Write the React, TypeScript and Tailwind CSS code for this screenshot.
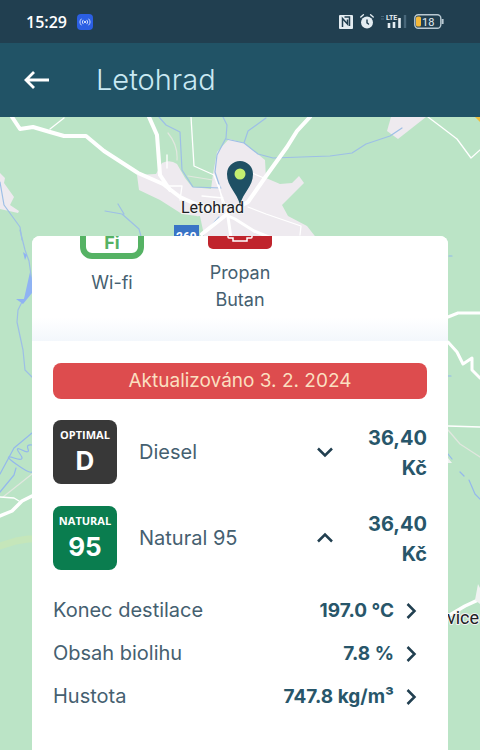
import React, { useState } from 'react';

interface FuelParameter {
  label: string;
  value: string;
}

interface Fuel {
  id: string;
  brand: string;
  grade: string;
  name: string;
  price: string;
  badgeClass: string;
  parameters: FuelParameter[];
}

const fuels: Fuel[] = [
  { id: 'diesel', brand: 'OPTIMAL', grade: 'D', name: 'Diesel', price: '36,40', badgeClass: 'bg-[#383838]', parameters: [] },
  {
    id: 'natural95',
    brand: 'NATURAL',
    grade: '95',
    name: 'Natural 95',
    price: '36,40',
    badgeClass: 'bg-[#0a7d4f]',
    parameters: [
      { label: 'Konec destilace', value: '197.0 °C' },
      { label: 'Obsah biolihu', value: '7.8 %' },
      { label: 'Hustota', value: '747.8 kg/m³' },
    ],
  },
];

const StatusBar: React.FC = () => (
  <div className="flex h-[43px] items-center justify-between bg-[#213f50] pl-[26px] pr-9">
    <div className="flex items-center gap-[10px]">
      <span className="font-['Open_Sans',sans-serif] text-[16px] font-semibold leading-6 text-white">15:29</span>
      <svg className="h-4 w-4" viewBox="0 0 16 16" fill="none" stroke="#dbe6ff" strokeLinecap="round">
        <rect width="16" height="16" rx="4" fill="#2b5fe3" stroke="none" />
        <circle cx="8" cy="8" r="1" fill="#fff" stroke="none" />
        <path d="M6 6.2a2.6 2.6 0 0 0 0 3.6M10 6.2a2.6 2.6 0 0 1 0 3.6M4.2 5a4.4 4.4 0 0 0 0 6M11.8 5a4.4 4.4 0 0 1 0 6" strokeWidth="0.9" />
      </svg>
    </div>
    <div className="flex items-center gap-[7px]">
      <svg className="h-[14px] w-[14px]" viewBox="0 0 14 14">
        <rect width="14" height="14" rx="1" fill="#e4edf2" />
        <path d="M3.500 12V3.500L8.500 9V4.500M5.500 2H10.500V11" fill="none" stroke="#213f50" strokeWidth="1.500" />
      </svg>
      <svg className="h-[15px] w-[14px]" viewBox="0 0 14 15" fill="none" strokeLinecap="round">
        <circle cx="7" cy="8.500" r="6" fill="#e4edf2" />
        <path d="M0.800 3 3.400 0.800M13.200 3 10.600 0.800" stroke="#e4edf2" strokeWidth="1.400" />
        <path d="M7 6v2.800l1.500 1.200" stroke="#213f50" strokeWidth="1.400" />
      </svg>
      <svg className="h-[15px] w-[26px]" viewBox="0 0 26 15">
        <path d="M0 2.500h3M0 5h3" stroke="#48677a" strokeWidth="1" />
        <text x="5" y="6" fill="#e4edf2" className="font-['Roboto',sans-serif] text-[7px] font-bold">LTE</text>
        <path d="M8 9v5M13 8v6" stroke="#e4edf2" strokeWidth="2.600" />
        <path d="M18.500 4v10" stroke="#e4edf2" strokeWidth="2.600" />
        <path d="M24 1v13" stroke="#48677a" strokeWidth="2.400" />
      </svg>
      <svg className="h-[15px] w-[30px]" viewBox="0 0 30 15">
        <rect x="0.8" y="0.8" width="26" height="13.400" rx="3.500" fill="none" stroke="#b9c9d2" strokeWidth="1.400" />
        <path d="M28.600 5v5" stroke="#b9c9d2" strokeWidth="2" />
        <rect x="2" y="2.500" width="5" height="10" rx="1.500" fill="#f5b93a" />
        <text x="8" y="11.500" fill="#e4edf2" className="font-['Roboto',sans-serif] text-[11px]">18</text>
      </svg>
    </div>
  </div>
);

const AreaMap: React.FC = () => (
  <svg
    className="absolute inset-0 h-full w-full"
    viewBox="0 117 480 633"
    preserveAspectRatio="xMidYMin slice"
    fill="none"
    strokeLinejoin="round"
    strokeLinecap="round"
  >
    <rect y="117" width="480" height="633" fill="#bbe4c6" />
    {/* built-up areas */}
    <g fill="#eeeaef">
      <path d="M0 173 5 178 4 183 14 197 10 205 19 211 18 213 0 209Z" />
      <path d="M137 175 156 174 162 163Q170 159 177 164L185 178 192 187 211 189 213 174 217 152 229 139 244 143 265 160 266 178 280 184 292 183 299 176 304 183 282 205 288 216 307 226 318 240H205L197 216 182 214 160 200 139 190Z" />
      <path d="M391 117H426L398 139 387 131Z" />
    </g>
    <path d="M182 218 200 216 205 240H180Z" fill="#bbe4c6" />
    {/* streams */}
    <g stroke="#9dbfe6" strokeWidth="1.200">
      <path d="M159 117 166 125 180 132 182 170 193 187 221 188M223 117 227 125 226 138 217 155 215 172 220 187M226 139 244 143 248 131 266 118M244 143 258 154 273 158 330 156 352 153 366 144 390 136 402 128" />
      <path d="M0 182 4 205 20 227 22 240M105 211 122 214 139 229 142 240M118 204 124 214M219 217 202 236" />
      <path d="M20 230 25 250 29 261 32 282M31 292 22 302 18 310 17 322 23 350 25 370 32 377" />
    </g>
    <g stroke="#94b8ec" strokeWidth="1.200">
      <path d="M32 433 14 448 0 474M32 445Q26 444 28 449T22 450 20 454 14 458 16 464 32 472M16 468 14 475 0 492" />
      <path d="M448 454 452 459M460 472 464 476M469 480 475 494 480 499M449 256H452M448 376H451" />
    </g>
    <path d="M23 252 27 255 25 260ZM30 272 32 281V293L23 304 16 299 24 299Z" fill="#8fb3f3" />
    {/* roads */}
    <g stroke="#e1e7df" strokeWidth="1.200">
      <path d="M168 133Q178 145 177 160M188 176 213 180M448 430 460 444 480 457M32 474 3 497" />
    </g>
    <path d="M0 546 16 541 28 539H32" stroke="#c5e6ba" strokeWidth="7" />
    <g stroke="#fff">
      <path d="M12 117 20 129 33 127 50 132 64 136 86 136 104 151 138 173 163 184 180 197 202 207 222 210" strokeWidth="4" />
      <path d="M149 117 157 135 160 175 170 190" strokeWidth="4" />
      <path d="M310 117 297 131 287 147 264 179 248 202 231 211 202 234" strokeWidth="4" />
      <path d="M226 215 235 219 254 231 276 240M227 210 231 238" strokeWidth="3" />
      <path d="M50 129 64 118M191 117 194 166 214 175 227 210M428 117 440 126 457 139 471 158 480 150M248 207 266 214 301 226 300 235M167 168V155M165 186H182L180 200M252 173 264 178M202 196 223 198M219 185 223 206" strokeWidth="1.300" />
      <path d="M448 317 458 313 480 313M448 342 457 352 463 364 472 358 472 370 480 378" strokeWidth="3" />
      <path d="M0 516 12 511 22 501 34 495" strokeWidth="3.500" />
      <path d="M0 497 14 498 19 501M448 426 480 427" strokeWidth="1.400" />
      <path d="M448 616 465 606 480 599" strokeWidth="3.500" />
    </g>
    <path d="M448 458 452 463H448ZM478 584 480 588V604L475 600Z" fill="#f1f3f2" />
    <path d="M475 117H480V122Z" fill="#efbf3b" />
    <rect x="174" y="225" width="25" height="20" fill="#3974c6" />
    <text x="176" y="241" fill="#fff" className="font-['Roboto',sans-serif] text-[12px] font-bold">269</text>
    <g stroke="#f4f4f4" strokeWidth="2" paintOrder="stroke" fill="#202124" className="font-['Roboto',sans-serif] text-[16px]">
      <text x="181" y="213">Letohrad</text>
      <text x="447" y="624" className="text-[18px]">vice</text>
    </g>
    <path d="M240 205C237 192 227 187 227 174A13 13 0 0 1 253 174C253 187 243 192 240 205Z" fill="#1f5064" />
    <circle cx="240" cy="174" r="5.500" fill="#c4ee70" />
  </svg>
);

const Services: React.FC = () => (
  <ul className="-mt-[51px] flex gap-16 bg-linear-to-b from-white from-85% to-[#f3f7fc] pb-7 pl-12 text-center text-[18px] leading-[27px] text-[#456070]">
    <li className="flex w-16 flex-col items-center pt-[10px]">
      <svg className="h-16 w-16" viewBox="0 0 64 64">
        <rect x="3" y="3" width="58" height="58" rx="9" fill="#fff" stroke="#55b264" strokeWidth="6" />
        <text x="32" y="54" textAnchor="middle" fill="#55b264" className="text-[18px] font-bold">Fi</text>
      </svg>
      <span className="mt-[10px]">Wi-fi</span>
    </li>
    <li className="flex w-16 flex-col items-center">
      <svg className="h-16 w-16" viewBox="0 0 64 64" fill="none" stroke="#fff" strokeWidth="1.500">
        <rect width="64" height="64" rx="5" fill="#c0242c" stroke="none" />
        <path d="M24 12h16v8H24zM20 24q12-8 24 0v28q0 1-1 1h-4v3H25v-3h-4q-1 0-1-1z" />
      </svg>
      <span className="mt-[10px]">Propan Butan</span>
    </li>
  </ul>
);

interface ChevronProps {
  className?: string;
}

const Chevron: React.FC<ChevronProps> = ({ className }) => (
  <svg className={className} viewBox="0 0 16 16" fill="none" stroke="#213f50" strokeWidth="2.500">
    <path d="M1 4.500 8 11.500 15 4.500" />
  </svg>
);

interface FuelRowProps {
  fuel: Fuel;
  expanded: boolean;
  onToggle: () => void;
}

const FuelRow: React.FC<FuelRowProps> = ({ fuel, expanded, onToggle }) => (
  <li>
    <button type="button" aria-expanded={expanded} onClick={onToggle} className="flex w-full items-center text-left">
      <span className={`flex h-16 w-16 shrink-0 flex-col items-center rounded-lg pt-2 text-white ${fuel.badgeClass}`}>
        <span className="font-['Open_Sans',sans-serif] text-[11px] font-bold leading-[14px]">{fuel.brand}</span>
        <span className="text-[26px] font-bold leading-[38px]">{fuel.grade}</span>
      </span>
      <span className="ml-[22px] flex-1 text-[20px] leading-8 text-[#456070]">{fuel.name}</span>
      <Chevron className={expanded ? 'h-4 w-4 rotate-180' : 'h-4 w-4'} />
      <span className="ml-8 w-[62px] pt-[2px] text-right text-[20px] font-bold leading-[30px] text-[#28566a]">
        {fuel.price} Kč
      </span>
    </button>
    {expanded && fuel.parameters.length > 0 && (
      <ul className="pt-[19px]">
        {fuel.parameters.map(parameter => (
          <li key={parameter.label}>
            <button type="button" className="flex h-[43px] w-full items-center pr-2 text-left">
              <span className="flex-1 text-[20px] leading-[29px] text-[#456070]">{parameter.label}</span>
              <span className="text-[19px] font-bold leading-[29px] text-[#28566a]">{parameter.value}</span>
              <Chevron className="ml-[9px] h-4 w-4 -rotate-90" />
            </button>
          </li>
        ))}
      </ul>
    )}
  </li>
);

const App: React.FC = () => {
  const [expandedId, setExpandedId] = useState('natural95');

  return (
    <div className="flex min-h-screen flex-col overflow-hidden font-['Inter',sans-serif]">
      <StatusBar />
      <header className="flex h-[74px] items-center gap-[46px] bg-[#215366] pl-6">
        <button type="button" aria-label="Zpět">
          <svg className="h-[18px] w-[26px]" viewBox="0 0 26 18" fill="none" stroke="#fff" strokeWidth="2.800">
            <path d="M10 1 2 9l8 8M2 9h23" />
          </svg>
        </button>
        <h1 className="text-[29px] font-light leading-[38px] text-[#c9e9f3]">Letohrad</h1>
      </header>
      <main className="relative flex flex-1 flex-col px-8 pt-[119px]">
        <AreaMap />
        <section className="relative flex-1 overflow-hidden rounded-t-lg bg-white">
          <Services />
          <div className="px-[21px] pb-8 pt-[22px]">
            <p className="rounded-lg bg-[#dd4c4e] text-center text-[19px] leading-9 text-[#fbdfc0]">Aktualizováno 3. 2. 2024</p>
            <ul className="mt-[21px] flex flex-col gap-[22px]">
              {fuels.map(fuel => (
                <FuelRow
                  key={fuel.id}
                  fuel={fuel}
                  expanded={fuel.id === expandedId}
                  onToggle={() => setExpandedId(fuel.id === expandedId ? '' : fuel.id)}
                />
              ))}
            </ul>
          </div>
        </section>
      </main>
    </div>
  );
};

export default App;
